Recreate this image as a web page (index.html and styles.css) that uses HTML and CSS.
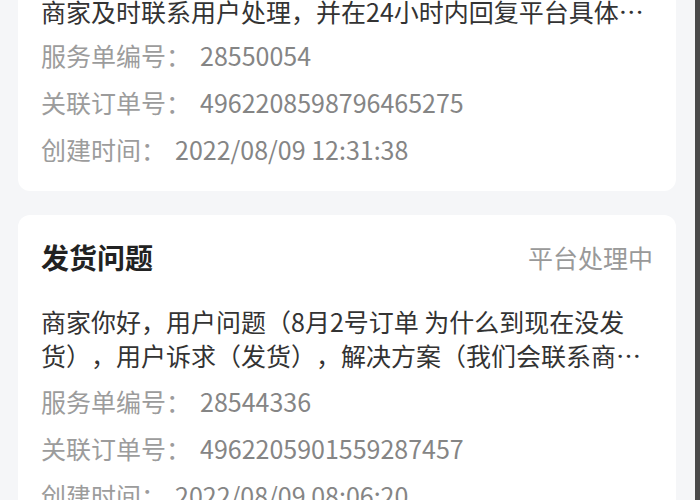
FILE: index.html
```html
<!DOCTYPE html>
<html lang="zh-CN">
<head>
<meta charset="utf-8">
<title>服务单列表</title>
<link rel="stylesheet" href="styles.css">
</head>
<body>
<div class="screen">
  <main class="list">
    <section class="card card-first">
      <p class="desc one">商家及时联系用户处理，并在24小时内回复平台具体处理方案和结果，感谢配合</p>
      <div class="rows">
        <div class="row"><span class="label">服务单编号：</span><span class="value">28550054</span></div>
        <div class="row"><span class="label">关联订单号：</span><span class="value">4962208598796465275</span></div>
        <div class="row"><span class="label">创建时间：</span><span class="value">2022/08/09 12:31:38</span></div>
      </div>
    </section>
    <section class="card">
      <header class="head">
        <h2 class="title">发货问题</h2>
        <span class="status">平台处理中</span>
      </header>
      <p class="desc clamp">商家你好，用户问题（8月2号订单 为什么到现在没发<br>货），用户诉求（发货），解决方案（我们会联系商家尽快为您安排发货处理）</p>
      <div class="rows">
        <div class="row"><span class="label">服务单编号：</span><span class="value">28544336</span></div>
        <div class="row"><span class="label">关联订单号：</span><span class="value">4962205901559287457</span></div>
        <div class="row"><span class="label">创建时间：</span><span class="value">2022/08/09 08:06:20</span></div>
      </div>
    </section>
  </main>
  <div class="edge"></div>
</div>
</body>
</html>
```
FILE: styles.css
```css
* { box-sizing: border-box; }
html, body { margin: 0; padding: 0; }
body {
  background: #f5f6f8;
  font-family: "Noto Sans CJK SC", "Noto Sans", sans-serif;
  overflow: hidden;
  text-spacing-trim: space-all;
}
.screen {
  display: flex;
  width: 700px;
  height: 500px;
  overflow: hidden;
}
.list {
  flex: 1;
  min-width: 0;
  display: flex;
  flex-direction: column;
  gap: 24px;
  padding: 0 19px 0 18px;
}
.edge {
  flex: 0 0 5px;
  background: #4a4a4a;
}
.card {
  min-width: 0;
  flex-shrink: 0;
  background: #fff;
  border-radius: 12px;
  padding: 22px 23px 25px 23px;
}
.card-first {
  margin-top: -31px;
  padding-top: 25px;
}
.head {
  display: flex;
  justify-content: space-between;
  align-items: center;
  height: 40px;
}
.title {
  margin: 0;
  font-size: 28px;
  font-weight: 700;
  color: #222;
  line-height: 40px;
}
.status {
  font-size: 25px;
  color: #999;
  line-height: 40px;
}
.desc {
  margin: 0;
  font-size: 25px;
  line-height: 34px;
  color: #333;
}
.card .head + .desc { margin-top: 27px; }
.one {
  white-space: nowrap;
  overflow: hidden;
  text-overflow: ellipsis;
}
.clamp {
  display: -webkit-box;
  -webkit-box-orient: vertical;
  -webkit-line-clamp: 2;
  overflow: hidden;
  max-height: 68px;
}
.rows {
  display: flex;
  flex-direction: column;
  gap: 13px;
  margin-top: 10px;
}
.clamp + .rows { margin-top: 12px; }
.row {
  font-size: 25px;
  line-height: 34px;
  display: flex;
}
.label { color: #9c9c9c; margin-right: 9px; }
.value { color: #858585; }
```
